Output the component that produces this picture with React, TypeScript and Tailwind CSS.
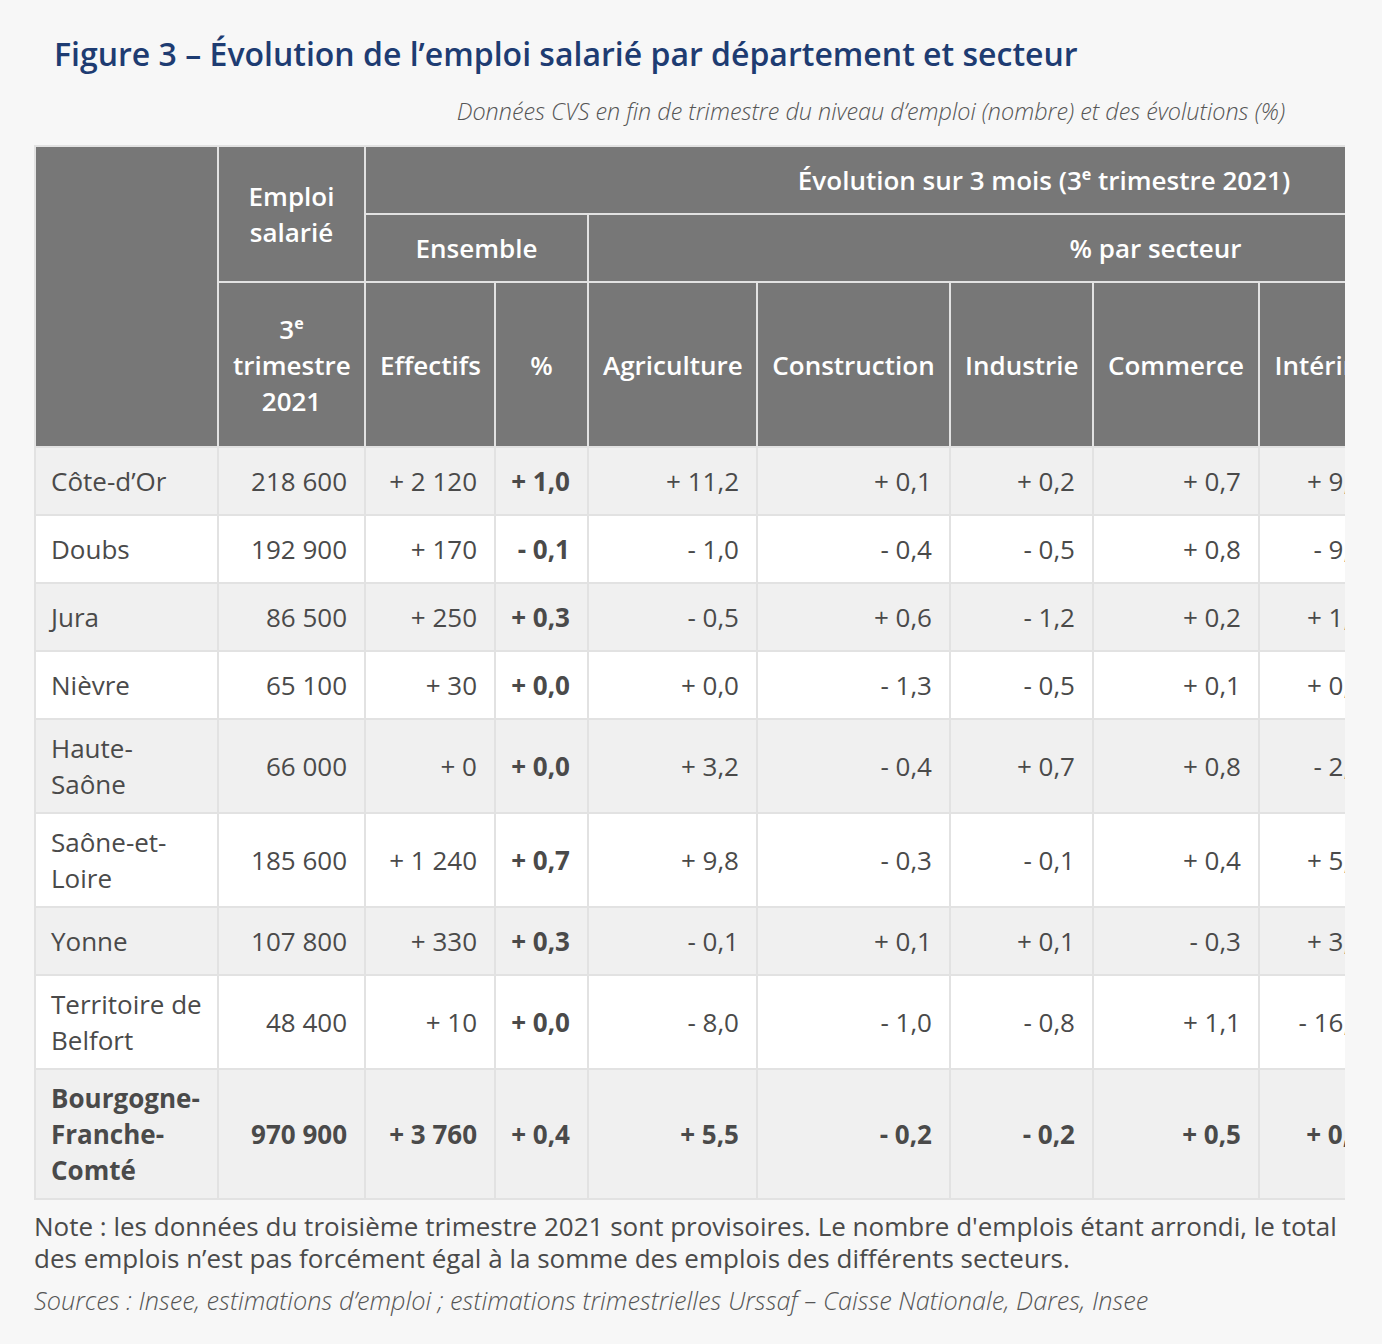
import React from "react";

type Row = {
  name: React.ReactNode;
  emploi: string;
  effectifs: string;
  pct: string;
  secteurs: string[];
  total?: boolean;
};

const nb = (s: string) => s.replace(/ /g, "\u00a0");

const rows: Row[] = [
  { name: "Côte-d’Or", emploi: "218 600", effectifs: "+ 2 120", pct: "+ 1,0", secteurs: ["+ 11,2", "+ 0,1", "+ 0,2", "+ 0,7", "+ 9,4", "+ 0,6", "+ 0,3"] },
  { name: "Doubs", emploi: "192 900", effectifs: "+ 170", pct: "- 0,1", secteurs: ["- 1,0", "- 0,4", "- 0,5", "+ 0,8", "- 9,3", "+ 0,2", "+ 0,1"] },
  { name: "Jura", emploi: "86 500", effectifs: "+ 250", pct: "+ 0,3", secteurs: ["- 0,5", "+ 0,6", "- 1,2", "+ 0,2", "+ 1,8", "+ 0,7", "+ 0,2"] },
  { name: "Nièvre", emploi: "65 100", effectifs: "+ 30", pct: "+ 0,0", secteurs: ["+ 0,0", "- 1,3", "- 0,5", "+ 0,1", "+ 0,5", "+ 0,3", "+ 0,1"] },
  { name: <>Haute-<br />Saône</>, emploi: "66 000", effectifs: "+ 0", pct: "+ 0,0", secteurs: ["+ 3,2", "- 0,4", "+ 0,7", "+ 0,8", "- 2,1", "+ 0,1", "- 0,2"] },
  { name: <>Saône-et-<br />Loire</>, emploi: "185 600", effectifs: "+ 1 240", pct: "+ 0,7", secteurs: ["+ 9,8", "- 0,3", "- 0,1", "+ 0,4", "+ 5,6", "+ 0,9", "+ 0,2"] },
  { name: "Yonne", emploi: "107 800", effectifs: "+ 330", pct: "+ 0,3", secteurs: ["- 0,1", "+ 0,1", "+ 0,1", "- 0,3", "+ 3,2", "+ 0,6", "+ 0,1"] },
  { name: <>Territoire de<br />Belfort</>, emploi: "48 400", effectifs: "+ 10", pct: "+ 0,0", secteurs: ["- 8,0", "- 1,0", "- 0,8", "+ 1,1", "- 16,4", "+ 0,5", "+ 0,1"] },
  { name: <>Bourgogne-<br />Franche-<br />Comté</>, emploi: "970 900", effectifs: "+ 3 760", pct: "+ 0,4", secteurs: ["+ 5,5", "- 0,2", "- 0,2", "+ 0,5", "+ 0,9", "+ 0,5", "+ 0,2"], total: true },
];

// column widths, border to border
const widths = [183, 147, 130, 93, 169, 193, 143, 166, 124, 180, 160];
const sectors = ["Agriculture", "Construction", "Industrie", "Commerce", "Intérim", "Services", "Non marchand"];

const th = "border-2 border-[#e2e2e2] bg-[#777777] text-white font-semibold text-center px-[14px] align-middle";
const td = "border-2 border-[#e2e2e2] pl-[15px] pr-[17px] py-[10px] text-right align-middle whitespace-nowrap";

function Sup() {
  return <sup className="relative top-[-10px] align-baseline text-[16px] font-bold leading-none">e</sup>;
}

export default function App() {
  return (
    <div
      className="min-h-[1344px] w-[1382px] bg-[#f7f7f7] pl-[34px] pt-[32px] text-[#4a4a4a]"
      style={{ fontFamily: '"Open Sans", "Liberation Sans", sans-serif' }}
    >
      <h1 className="pl-[20px] text-[32px] leading-[44px] font-semibold text-[#1e3c72]">
        Figure 3 – Évolution de l’emploi salarié par département et secteur
      </h1>
      <p className="mt-[20px] w-[1251px] text-right text-[23.4px] leading-[30px] font-light italic text-[#555]">
        Données CVS en fin de trimestre du niveau d’emploi (nombre) et des évolutions (%)
      </p>

      <div className="mt-[19px] w-[1311px] overflow-hidden">
        <table
          className="table-fixed border-collapse text-[26px] leading-[36px]"
          style={{ width: widths.reduce((a, b) => a + b, 0) }}
        >
          <colgroup>
            {widths.map((w, i) => (
              <col key={i} style={{ width: w }} />
            ))}
          </colgroup>
          <thead>
            <tr className="h-[68px]">
              <th rowSpan={3} className={th}></th>
              <th rowSpan={2} className={th}>
                Emploi
                <br />
                salarié
              </th>
              <th colSpan={9} className={th}>
                Évolution sur 3 mois (3<Sup /> trimestre 2021)
              </th>
            </tr>
            <tr className="h-[68px]">
              <th colSpan={2} className={th}>Ensemble</th>
              <th colSpan={7} className={th}>% par secteur</th>
            </tr>
            <tr className="h-[165px]">
              <th className={th}>
                3<Sup />
                <br />
                trimestre
                <br />
                2021
              </th>
              <th className={th}>Effectifs</th>
              <th className={th}>%</th>
              {sectors.map((s) => (
                <th key={s} className={th}>
                  {s}
                </th>
              ))}
            </tr>
          </thead>
          <tbody>
            {rows.map((r, i) => (
              <tr key={i} className={`h-[68px] ${i % 2 === 0 ? "bg-[#f0f0f0]" : "bg-white"}`}>
                <td className={`${td} !text-left ${r.total ? "font-bold" : ""}`}>{r.name}</td>
                <td className={`${td} ${r.total ? "font-bold" : ""}`}>{nb(r.emploi)}</td>
                <td className={`${td} ${r.total ? "font-bold" : ""}`}>{nb(r.effectifs)}</td>
                <td className={`${td} font-bold`}>{nb(r.pct)}</td>
                {r.secteurs.map((v, j) => (
                  <td key={j} className={`${td} ${r.total ? "font-bold" : ""}`}>
                    {nb(v)}
                  </td>
                ))}
              </tr>
            ))}
          </tbody>
        </table>
      </div>

      <p className="mt-[10px] w-[1311px] text-[26px] leading-[32px] text-[#4a4a4a]">
        Note : les données du troisième trimestre 2021 sont provisoires. Le nombre d'emplois étant arrondi, le total
        des emplois n’est pas forcément égal à la somme des emplois des différents secteurs.
      </p>
      <p className="mt-[10px] text-[25.3px] leading-[32px] font-light italic text-[#555]">
        Sources : Insee, estimations d’emploi ; estimations trimestrielles Urssaf – Caisse Nationale, Dares, Insee
      </p>
    </div>
  );
}
